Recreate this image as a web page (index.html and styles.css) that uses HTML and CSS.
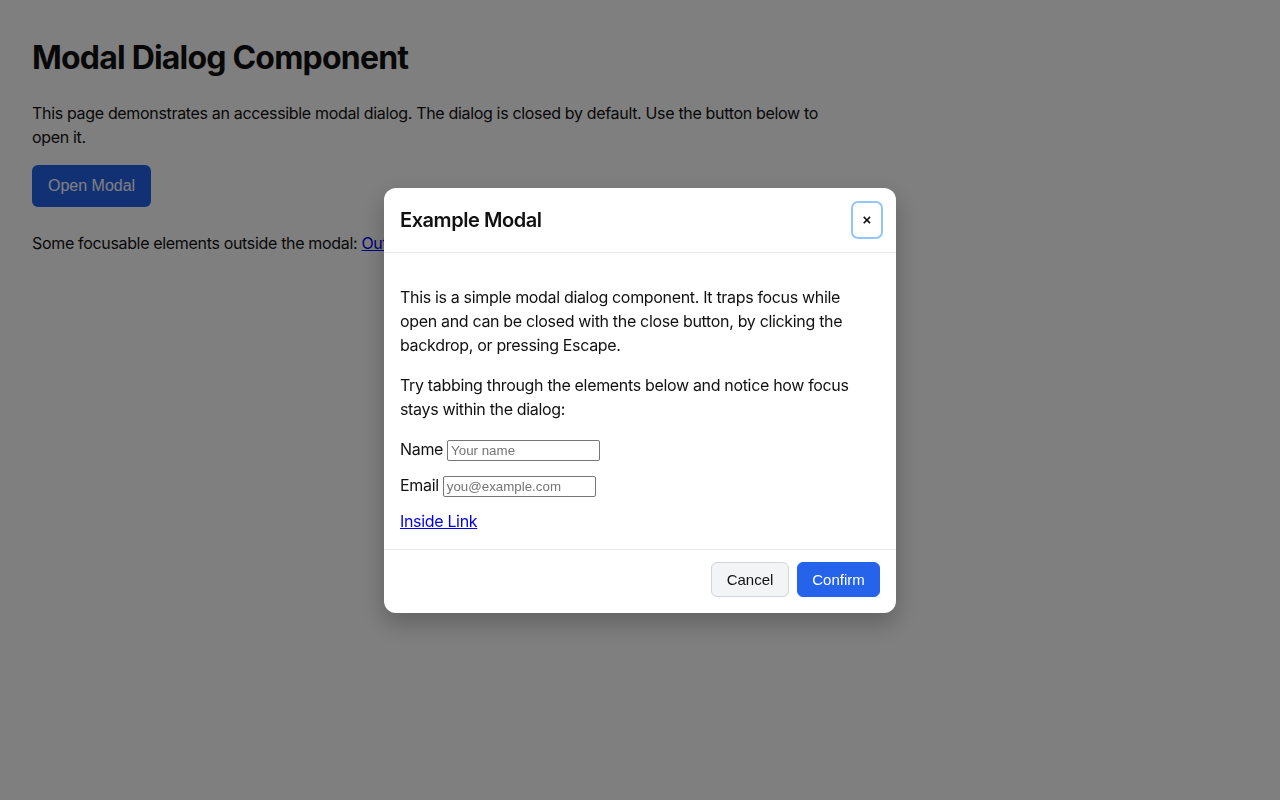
FILE: index.html
```html
<!DOCTYPE html>
<html lang="en">
<head>
<meta charset="utf-8">
<title>Modal Dialog Component</title>
<link rel="stylesheet" href="styles.css">
</head>
<body>
<main class="page">
  <h1 class="page-title">Modal Dialog Component</h1>
  <p class="intro">This page demonstrates an accessible modal dialog. The dialog is closed by default. Use the button below to open it.</p>
  <button class="open-btn" type="button">Open Modal</button>
  <p class="outside">Some focusable elements outside the modal: <a href="#">Outside Link</a> <button type="button" class="outside-btn">Outside Button</button></p>
</main>

<div class="overlay">
  <div class="modal" role="dialog" aria-modal="true" aria-labelledby="modal-title">
    <header class="modal-header">
      <h2 id="modal-title" class="modal-title">Example Modal</h2>
      <button class="close-btn" type="button" aria-label="Close">×</button>
    </header>
    <div class="modal-body">
      <p>This is a simple modal dialog component. It traps focus while open and can be closed with the close button, by clicking the backdrop, or pressing Escape.</p>
      <p>Try tabbing through the elements below and notice how focus stays within the dialog:</p>
      <div class="field"><label for="name">Name</label> <input id="name" class="input" type="text" placeholder="Your name"></div>
      <div class="field"><label for="email">Email</label> <input id="email" class="input" type="email" placeholder="you@example.com"></div>
      <div class="field last"><a href="#">Inside Link</a></div>
    </div>
    <footer class="modal-footer">
      <button class="btn btn-secondary" type="button">Cancel</button>
      <button class="btn btn-primary" type="button">Confirm</button>
    </footer>
  </div>
</div>
</body>
</html>
```

FILE: styles.css
```css
* { box-sizing: border-box; }

html, body {
  margin: 0;
  padding: 0;
  height: 100%;
}

body {
  font-family: Inter, "Noto Sans", sans-serif;
  font-size: 16px;
  line-height: 24px;
  letter-spacing: -0.33px;
  color: #111;
  background: #fff;
}

.page {
  padding: 32px;
  max-width: 864px;
}

.page-title {
  font-size: 32px;
  font-weight: 700;
  line-height: 38px;
  margin: 7px 0 24px;
  letter-spacing: -0.8px;
}

.intro {
  margin: 0 0 16px;
}

.open-btn {
  display: block;
  font-family: "Liberation Sans", Arial, sans-serif;
  font-size: 16px;
  line-height: 18px;
  letter-spacing: 0;
  padding: 12px 16px;
  border: none;
  border-radius: 6px;
  background: #2563eb;
  color: #fff;
  margin: 0 0 24px;
}

.outside {
  margin: 0;
}

.outside a { color: #0000ee; }

.outside-btn {
  font-family: "Liberation Sans", Arial, sans-serif;
  font-size: 13.33px;
  letter-spacing: 0;
}

.overlay {
  position: fixed;
  inset: 0;
  background: rgba(0, 0, 0, 0.5);
  display: flex;
  align-items: center;
  justify-content: center;
}

.modal {
  width: 512px;
  background: #fff;
  border-radius: 12px;
  box-shadow: 0 10px 25px rgba(0, 0, 0, 0.25);
  overflow: hidden;
}

.modal-header {
  display: flex;
  align-items: center;
  justify-content: space-between;
  padding: 13px 13px 13px 16px;
  border-bottom: 1px solid #e5e7eb;
}

.modal-title {
  margin: 0;
  font-size: 20px;
  font-weight: 600;
  line-height: 28px;
  letter-spacing: -0.45px;
  color: #111;
}

.close-btn {
  width: 32px;
  height: 38px;
  display: flex;
  align-items: center;
  justify-content: center;
  padding: 0;
  background: #fff;
  border: 2px solid #93c5fd;
  border-radius: 7px;
  font-family: "Liberation Sans", Arial, sans-serif;
  font-size: 15px;
  font-weight: 700;
  letter-spacing: 0;
  color: #111;
  line-height: 1;
}

.modal-body {
  padding: 32px 16px 16px;
}

.modal-body p {
  margin: 0 0 16px;
}

.field {
  margin: 0 0 12px;
  display: flex;
  align-items: center;
  gap: 4px;
  height: 24px;
}

.field.last {
  margin-bottom: 0;
}

.field a { color: #0000ee; }

.input {
  width: 153px;
  height: 21px;
  border: 1px solid #767676;
  border-radius: 2px;
  padding: 1px 3px;
  font-family: "Liberation Sans", Arial, sans-serif;
  font-size: 13.33px;
  letter-spacing: 0;
  color: #111;
  margin-top: 3px;
}

.input::placeholder { color: #757575; }

.modal-footer {
  display: flex;
  justify-content: flex-end;
  gap: 8px;
  padding: 12px 16px 16px;
  border-top: 1px solid #e5e7eb;
}

.btn {
  height: 35px;
  font-family: "Liberation Sans", Arial, sans-serif;
  font-size: 15px;
  line-height: 17px;
  letter-spacing: 0;
  padding: 8px 14px;
  border-radius: 6px;
}

.btn-secondary {
  background: #f3f4f6;
  border: 1px solid #d1d5db;
  color: #111;
  width: 78px;
}

.btn-primary {
  background: #2563eb;
  border: 1px solid #2563eb;
  color: #fff;
  width: 83px;
}
```
